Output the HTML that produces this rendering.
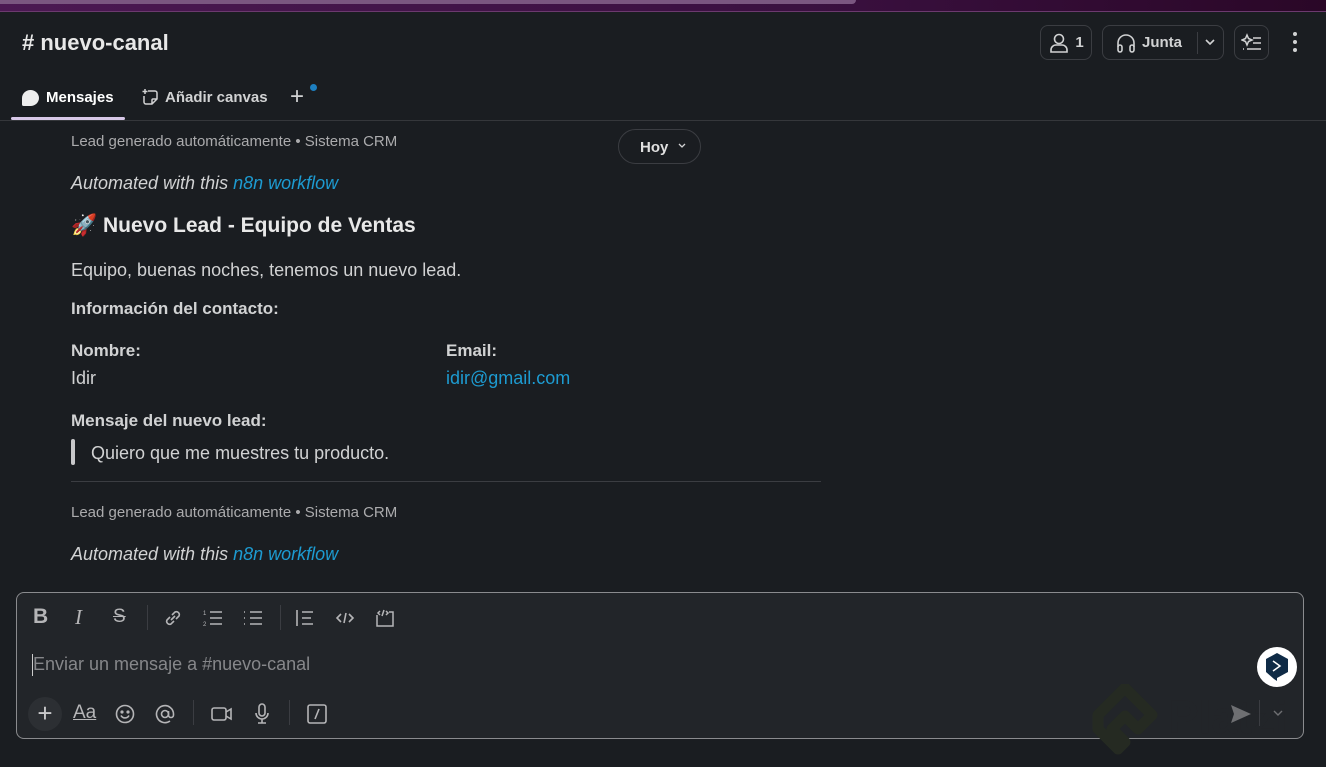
<!DOCTYPE html>
<html><head><meta charset="utf-8"><style>
*{margin:0;padding:0;box-sizing:border-box}
body{width:1326px;height:767px;background:#1a1d21;font-family:"Liberation Sans",sans-serif;color:#d1d2d3;position:relative;overflow:hidden}
.a{position:absolute}
.top{left:0;top:0;width:1326px;height:12px;background:linear-gradient(90deg,#4b1852,#3a1040 60%,#2a0727);border-bottom:1px solid #6b3a6e}
.topl{left:0;top:0;width:856px;height:4px;background:#7a5680;border-radius:0 0 4px 0}
.btn{border:1px solid #3b3d42;border-radius:8px;height:35px;top:25px;display:flex;align-items:center;justify-content:center;color:#d1d2d3;font-weight:bold;font-size:15px}
.t{font-size:18px;color:#d1d2d3}
.s{font-size:15px;color:#ababad}
.b{font-weight:bold;font-size:17px}
.lnk{color:#1d9bd1}
svg{display:block}
</style></head><body>
<div class="a top"></div><div class="a topl"></div>
<div class="a" style="left:22px;top:30px;font-size:22px;font-weight:bold;color:#e8e8e8"># nuevo-canal</div>
<div class="a btn" style="left:1040px;width:52px"><svg width="22" height="22" viewBox="0 0 22 22" fill="none" stroke="#d1d2d3" stroke-width="1.6"><circle cx="11" cy="7" r="4.5"/><path d="M3 20v-2a5 5 0 015-5h6a5 5 0 015 5v2z"/></svg><span style="margin-left:5px">1</span></div>
<div class="a btn" style="left:1102px;width:122px;justify-content:flex-start;padding-left:12px"><svg width="22" height="22" viewBox="0 0 22 22" fill="none" stroke="#d1d2d3" stroke-width="1.6"><path d="M3 15v-4a8 8 0 0116 0v4"/><rect x="3" y="13" width="4" height="7" rx="2"/><rect x="15" y="13" width="4" height="7" rx="2"/></svg><span style="margin-left:5px">Junta</span><div style="position:absolute;left:94px;top:6px;width:1px;height:22px;background:#3b3d42"></div><svg style="position:absolute;left:101px;top:12px" width="12" height="8" viewBox="0 0 12 8" fill="none" stroke="#d1d2d3" stroke-width="1.6"><path d="M2 2l4 4 4-4"/></svg></div>
<div class="a btn" style="left:1234px;width:35px"><svg width="22" height="20" viewBox="0 0 22 20" fill="none" stroke="#d1d2d3" stroke-width="1.5"><path d="M6 2l1.5 3.5L11 7l-3.5 1.5L6 12 4.5 8.5 1 7l3.5-1.5z"/><path d="M12 5h8M12 10h8M6 16h14M2 16h1"/></svg></div>
<div class="a" style="left:1293px;top:32px;width:4px"><div style="width:4px;height:4px;border-radius:2px;background:#d1d2d3;margin-bottom:4px"></div><div style="width:4px;height:4px;border-radius:2px;background:#d1d2d3;margin-bottom:4px"></div><div style="width:4px;height:4px;border-radius:2px;background:#d1d2d3"></div></div>
<div class="a" style="left:22px;top:90px;width:17px;height:16px;background:#eee;border-radius:50% 50% 50% 10%"></div>
<div class="a" style="left:46px;top:89px;font-size:15px;font-weight:bold;color:#fff">Mensajes</div>
<div class="a" style="left:11px;top:117px;width:114px;height:3px;background:#d8c8e8;border-radius:2px"></div>
<div class="a" style="left:141px;top:88px"><svg width="18" height="18" viewBox="0 0 18 18" fill="none" stroke="#d1d2d3" stroke-width="1.5"><path d="M7 3h7a2 2 0 012 2v6l-5 5H5a2 2 0 01-2-2V8M16 11h-4a1 1 0 00-1 1v4M4 1v5M1.5 3.5h5"/></svg></div>
<div class="a" style="left:165px;top:89px;font-size:15px;font-weight:bold;color:#d1d2d3">Añadir canvas</div>
<div class="a" style="left:290px;top:83px;font-size:24px;color:#d1d2d3">+</div>
<div class="a" style="left:310px;top:84px;width:7px;height:7px;border-radius:50%;background:#1d7fc0"></div>
<div class="a" style="left:0;top:120px;width:1326px;height:1px;background:#35373b"></div>
<div class="a" style="left:618px;top:129px;width:83px;height:35px;border:1px solid #3b3d42;border-radius:18px;font-size:15px;font-weight:bold;color:#e0e0e0;padding:9px 0 0 21px">Hoy</div>
<svg class="a" style="left:678px;top:143px" width="8" height="6" viewBox="0 0 8 6" fill="none" stroke="#d1d2d3" stroke-width="1.3"><path d="M1 1l3 3 3-3"/></svg>
<div class="a s" style="left:71px;top:133px">Lead generado automáticamente • Sistema CRM</div>
<div class="a t" style="left:71px;top:173px;font-style:italic">Automated with this <span class="lnk">n8n workflow</span></div>
<div class="a" style="left:71px;top:214px;font-size:21px;font-weight:bold;color:#e8e8e8">🚀 Nuevo Lead - Equipo de Ventas</div>
<div class="a t" style="left:71px;top:260px">Equipo, buenas noches, tenemos un nuevo lead.</div>
<div class="a t b" style="left:71px;top:299px">Información del contacto:</div>
<div class="a t b" style="left:71px;top:341px">Nombre:</div>
<div class="a t" style="left:71px;top:368px">Idir</div>
<div class="a t b" style="left:446px;top:341px">Email:</div>
<div class="a t lnk" style="left:446px;top:368px">idir@gmail.com</div>
<div class="a t b" style="left:71px;top:411px">Mensaje del nuevo lead:</div>
<div class="a" style="left:71px;top:439px;width:4px;height:26px;background:#c8c8ca;border-radius:2px"></div>
<div class="a t" style="left:91px;top:443px">Quiero que me muestres tu producto.</div>
<div class="a" style="left:71px;top:481px;width:750px;height:1px;background:#3b3d42"></div>
<div class="a s" style="left:71px;top:504px">Lead generado automáticamente • Sistema CRM</div>
<div class="a t" style="left:71px;top:544px;font-style:italic">Automated with this <span class="lnk">n8n workflow</span></div>
<div class="a" style="left:16px;top:592px;width:1288px;height:147px;border:1px solid #8a8b8e;border-radius:8px;background:#222529"></div>
<div class="a" style="left:33px;top:605px;font-size:21px;font-weight:bold;color:#b5b5b7">B</div>
<div class="a" style="left:75px;top:605px;font-size:21px;font-style:italic;font-family:'Liberation Serif',serif;color:#b5b5b7">I</div>
<div class="a" style="left:113px;top:606px;font-size:19px;color:#b5b5b7;text-decoration:line-through">S</div>
<div class="a" style="left:147px;top:605px;width:1px;height:25px;background:#3b3d42"></div>
<div class="a" style="left:162px;top:607px"><svg width="22" height="22" viewBox="0 0 22 22" fill="none" stroke="#b5b5b7" stroke-width="1.6"><path d="M9 13l4-4M8 10l-3 3a3 3 0 004 4l3-3M14 12l3-3a3 3 0 00-4-4l-3 3"/></svg></div>
<div class="a" style="left:202px;top:607px"><svg width="22" height="22" viewBox="0 0 22 22" fill="none" stroke="#b5b5b7" stroke-width="1.6"><path d="M8 5h12M8 11h12M8 17h12"/><text x="1" y="8" font-size="6" fill="#b5b5b7" stroke="none">1</text><text x="1" y="19" font-size="6" fill="#b5b5b7" stroke="none">2</text></svg></div>
<div class="a" style="left:242px;top:607px"><svg width="22" height="22" viewBox="0 0 22 22" fill="none" stroke="#b5b5b7" stroke-width="1.6"><path d="M8 5h12M8 11h12M8 17h12M2 5h1M2 11h1M2 17h1"/></svg></div>
<div class="a" style="left:280px;top:605px;width:1px;height:25px;background:#3b3d42"></div>
<div class="a" style="left:294px;top:607px"><svg width="22" height="22" viewBox="0 0 22 22" fill="none" stroke="#b5b5b7" stroke-width="1.6"><path d="M3 3v16M8 5h11M8 11h9M8 17h11"/></svg></div>
<div class="a" style="left:334px;top:607px"><svg width="22" height="22" viewBox="0 0 22 22" fill="none" stroke="#b5b5b7" stroke-width="1.6"><path d="M7 7l-4 4 4 4M15 7l4 4-4 4M12 6l-2 10"/></svg></div>
<div class="a" style="left:374px;top:607px"><svg width="22" height="22" viewBox="0 0 22 22" fill="none" stroke="#b5b5b7" stroke-width="1.5"><path d="M3 8v11h16V5h-4M6 4L4 6l2 2M12 4l2 2-2 2M10 3l-2 6"/></svg></div>
<div class="a" style="left:32px;top:654px;width:1px;height:22px;background:#ccc"></div>
<div class="a" style="left:33px;top:654px;font-size:18px;color:#86878a">Enviar un mensaje a #nuevo-canal</div>
<div class="a" style="left:28px;top:697px;width:34px;height:34px;border-radius:50%;background:#2c2f33;color:#c8c8ca;font-size:26px;text-align:center;line-height:32px">+</div>
<div class="a" style="left:73px;top:702px;font-size:19px;color:#b5b5b7;text-decoration:underline">Aa</div>
<div class="a" style="left:114px;top:703px"><svg width="22" height="22" viewBox="0 0 22 22" fill="none" stroke="#b5b5b7" stroke-width="1.6"><circle cx="11" cy="11" r="8.5"/><path d="M7 12.5a4.5 4.5 0 008 0"/><circle cx="8" cy="9" r=".8" fill="#b5b5b7"/><circle cx="14" cy="9" r=".8" fill="#b5b5b7"/></svg></div>
<div class="a" style="left:154px;top:703px"><svg width="22" height="22" viewBox="0 0 22 22" fill="none" stroke="#b5b5b7" stroke-width="1.6"><circle cx="11" cy="11" r="3.5"/><path d="M14.5 8v4a2.5 2.5 0 005 0v-1a8.5 8.5 0 10-3.5 7"/></svg></div>
<div class="a" style="left:193px;top:700px;width:1px;height:25px;background:#3b3d42"></div>
<div class="a" style="left:210px;top:703px"><svg width="24" height="22" viewBox="0 0 24 22" fill="none" stroke="#b5b5b7" stroke-width="1.6"><rect x="2" y="5" width="14" height="12" rx="2"/><path d="M16 9l5-3v10l-5-3"/></svg></div>
<div class="a" style="left:251px;top:702px"><svg width="22" height="24" viewBox="0 0 22 24" fill="none" stroke="#b5b5b7" stroke-width="1.6"><rect x="8" y="2" width="6" height="12" rx="3"/><path d="M5 11a6 6 0 0012 0M11 17v4M7 21h8"/></svg></div>
<div class="a" style="left:289px;top:700px;width:1px;height:25px;background:#3b3d42"></div>
<div class="a" style="left:306px;top:703px"><svg width="22" height="22" viewBox="0 0 22 22" fill="none" stroke="#b5b5b7" stroke-width="1.6"><rect x="2" y="2" width="18" height="18" rx="2"/><path d="M13 6l-4 10"/></svg></div>
<svg class="a" style="left:1090px;top:684px" width="70" height="76" viewBox="0 0 70 76"><path d="M35 4L62 31 48 45 35 32 22 45 35 58 28 65 8 45 8 31z" fill="none" stroke="#252a22" stroke-width="11" stroke-linejoin="round"/></svg>
<div class="a" style="left:1168px;top:690px;font-size:46px;font-weight:bold;color:#222529">Platzi</div>
<svg class="a" style="left:1230px;top:704px" width="22" height="20" viewBox="0 0 22 20"><path d="M1 1l20 9-20 9 3-9z" fill="#6e6f72"/></svg>
<div class="a" style="left:1259px;top:700px;width:1px;height:26px;background:#3b3d42"></div>
<svg class="a" style="left:1273px;top:710px" width="10" height="7" viewBox="0 0 10 7" fill="none" stroke="#6e6f72" stroke-width="1.4"><path d="M1 1l4 4 4-4"/></svg>
<div class="a" style="left:1257px;top:647px;width:40px;height:40px;border-radius:50%;background:#fff"></div>
<svg class="a" style="left:1264px;top:652px" width="26" height="30" viewBox="0 0 26 30"><path d="M13 1l11 6v13l-11 6v3l-3-2-8-7V7z" fill="#0f2b46"/><path d="M9 9l7 5-7 5" fill="none" stroke="#fff" stroke-width="1.5"/></svg>
</body></html>
